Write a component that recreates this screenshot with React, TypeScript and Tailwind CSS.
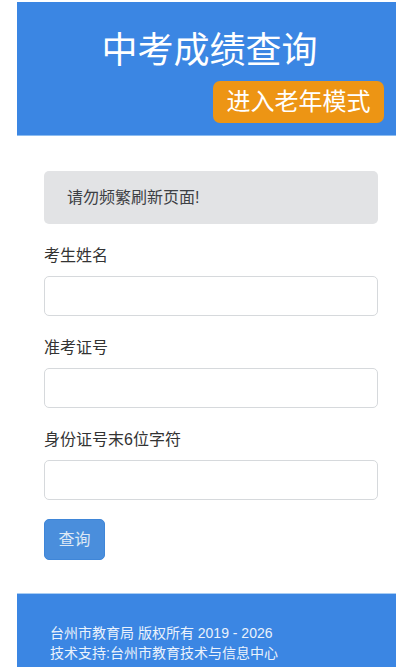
import React from "react";

const font = { fontFamily: '"Liberation Sans", "Noto Sans CJK SC", sans-serif' };

function Field({ label }: { label: string }) {
  return (
    <div className="mb-[20px]">
      <div className="text-[16px] leading-[24px] text-[#333] mb-[8px]">{label}</div>
      <div className="h-[40px] w-full rounded-[5px] border border-[#d6d9dc] bg-white" />
    </div>
  );
}

export default function App() {
  return (
    <div className="min-h-[667px] w-[409px] bg-white pt-[2px]" style={font}>
      <div className="ml-[17px] w-[379px]">
        <div className="bg-[#3b86e3] border-b border-[#8cbcf0] pt-[27px] pb-[12px] pr-[12px]">
          <div className="text-center text-white text-[36px] leading-[44px] pl-[18px]">中考成绩查询</div>
          <div className="mt-[8px] flex justify-end">
            <div className="h-[42px] w-[171px] rounded-[7px] bg-[#ed9514] text-white text-[24px] leading-[42px] text-center">
              进入老年模式
            </div>
          </div>
        </div>
        <div className="pl-[27px] pr-[18px] pt-[35px] pb-[33px]">
          <div className="h-[53px] rounded-[5px] bg-[#e2e3e5] pl-[23px] flex items-center text-[16px] text-[#3d4044] mb-[20px]">
            请勿频繁刷新页面!
          </div>
          <Field label="考生姓名" />
          <Field label="准考证号" />
          <div className="mb-[19px]">
            <div className="text-[16px] leading-[24px] text-[#333] mb-[8px]">身份证号末6位字符</div>
            <div className="h-[40px] w-full rounded-[5px] border border-[#d6d9dc] bg-white" />
          </div>
          <div className="h-[41px] w-[61px] rounded-[5px] bg-[#4a8edc] border border-[#3f86d8] text-[#dde8f5] text-[16px] flex items-center justify-center">
            查询
          </div>
        </div>
        <div className="bg-[#3b86e3] border-t border-[#a9cdf3] pt-[29px] pb-[6px] pl-[33px] text-[14px] leading-[20px] text-[#eaf2fc]">
          <div>台州市教育局 版权所有 2019 - 2026</div>
          <div>技术支持:台州市教育技术与信息中心</div>
        </div>
      </div>
    </div>
  );
}
